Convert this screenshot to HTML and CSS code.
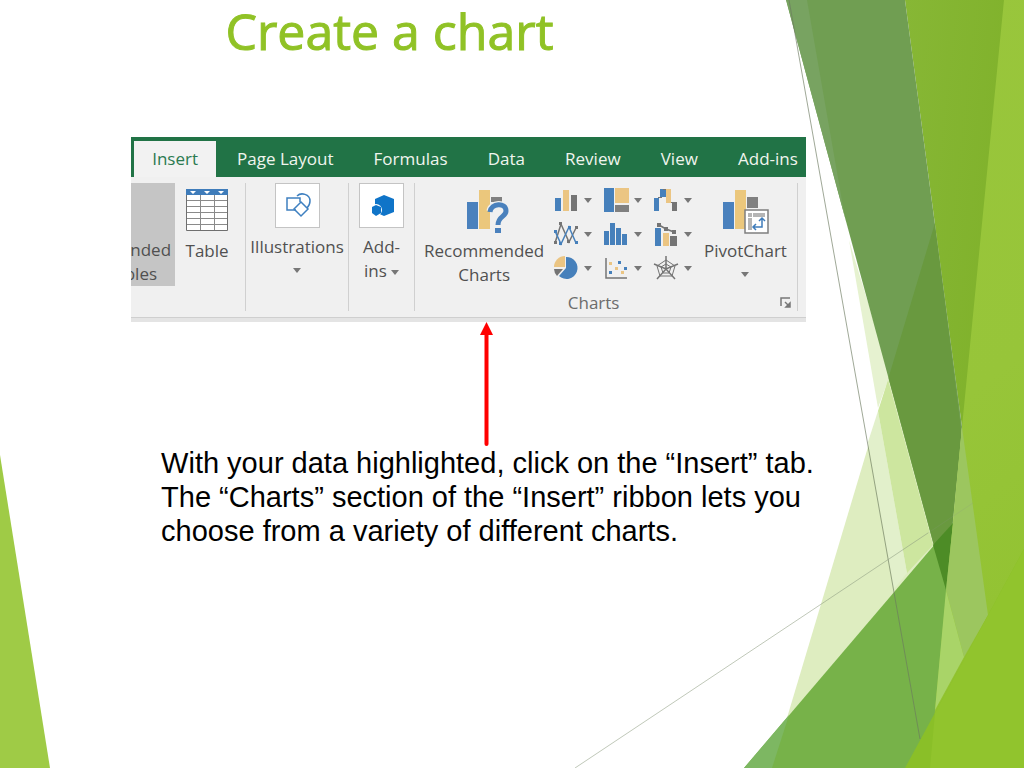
FILE: index.html
```html
<!DOCTYPE html>
<html lang="en">
<head>
<meta charset="utf-8">
<title>Create a chart</title>
<link rel="stylesheet" href="styles.css">
</head>
<body>
<svg class="facets" viewBox="0 0 1024 768" preserveAspectRatio="none" aria-hidden="true">
  <defs>
    <linearGradient id="mid" x1="0" y1="0" x2="1" y2="0.4"><stop offset="0" stop-color="#87b735"/><stop offset="1" stop-color="#7fb12a"/></linearGradient>
    <linearGradient id="right" x1="0" y1="0" x2="0.1" y2="1"><stop offset="0" stop-color="#99c63c"/><stop offset="0.55" stop-color="#97c539"/><stop offset="1" stop-color="#91c230"/></linearGradient>
    <clipPath id="bandClip"><path d="M786 0H905L962 427L946 590Z"/></clipPath>
  </defs>
  <path fill="#9fcb46" d="M0 455L50 768H0Z"/>
  <path fill="#deedc0" d="M935 223L772 768H960V223Z"/>
  <path fill="#e6f2d0" d="M849 240L878 408L890 375Z"/>
  <path fill="#cde69f" d="M888 380L878 411L907 573L933 545Z"/>
  <path fill="#e2f0cb" d="M878 411L868 442L894 589L907 573Z"/>
  <path fill="url(#mid)" d="M905 0H1024V427H962Z"/>
  <path fill="#709e52" d="M786 0H905L962 427L946 590Z"/>
  <g clip-path="url(#bandClip)">
    <path fill="#78a361" d="M786 0H807L860 304Z"/>
    <path fill="#69993f" d="M935 223L880 406L946 620L970 500Z"/>
  </g>
  <path fill="#77b249" d="M744 768L953 523L935 768Z"/>
  <path fill="#7db762" d="M744 768L789 715L772 768Z"/>
  <path fill="#4d8c26" d="M933 545L953 523L946 590Z"/>
  <path fill="url(#right)" d="M1004 0H1024V768H930L935 710L953 523L962 427Z"/>
  <path fill="#9cc65f" d="M962 427L988 615L964 657L946 590L953 523Z"/>
  <path fill="#a9d468" d="M946 590L964 657L935 710Z"/>
  <path fill="#8abf28" d="M1024 549L905 768H1024Z"/>
  <path fill="#91c42d" d="M935 713L1024 549V768H930Z"/>
  <path fill="none" stroke="#6b7a60" stroke-opacity="0.65" d="M789 0L920 739"/>
  <path fill="none" stroke="#8c9a80" stroke-opacity="0.55" d="M575 768L928 533"/>
  <path fill="none" stroke="#8c9a80" stroke-opacity="0.2" d="M928 533L973 503"/>
</svg>

<main class="slide">
  <h1 class="title">Create a chart</h1>

  <section class="ribbon" aria-label="Insert ribbon">
    <nav class="tabs">
      <button class="tab tab-active">Insert</button>
      <div class="tab-list">
        <button class="tab">Page Layout</button>
        <button class="tab">Formulas</button>
        <button class="tab">Data</button>
        <button class="tab">Review</button>
        <button class="tab">View</button>
        <button class="tab">Add-ins</button>
      </div>
    </nav>
    <div class="groups">
      <div class="group group-tables">
        <button class="clipped">
          <svg width="44" height="55" viewBox="0 0 44 55"><circle cx="-3" cy="29" r="6" fill="#3f80c0"/></svg>
          <span>nded</span>
          <span class="clipped-second">bles</span>
        </button>
        <button class="tool">
          <svg class="icon" width="44" height="44" viewBox="0 0 44 44">
            <path fill="#fff" d="M1 6H43V47H1Z"/>
            <path fill="none" stroke="#8a8a8a" d="M1 17.500H43M1 23.500H43M1 29.500H43M1 35.500H43M1 41.500H43M15.500 12V47M29.500 12V47"/>
            <path fill="none" stroke="#6f6f6f" d="M1.500 12V47.500H42.500V12"/>
            <path fill="#3f7cba" d="M1 6H43V12H1Z"/>
            <path fill="#fff" d="M5 8H11L8 11ZM19 8H25L22 11ZM33 8H39L36 11Z"/>
          </svg>
          <span>Table</span>
        </button>
      </div>
      <div class="group group-illustrations">
        <button class="tool tool-tile">
          <svg class="icon tile" width="45" height="45" viewBox="0 0 45 45" fill="none" stroke="#3f80c0" stroke-width="1.500">
            <path d="M21 27H12V15H25V19"/><path d="M22 13C26 9 35 11 35 18C35 21 34 23 32 25"/><path d="M26 19L33 26L26 33L19 26Z"/>
          </svg>
          <span>Illustrations</span>
          <i class="caret"></i>
        </button>
      </div>
      <div class="group group-addins">
        <button class="tool tool-tile">
          <svg class="icon tile" width="45" height="45" viewBox="0 0 45 45">
            <path fill="#0f74c8" d="M25 12L35 16V29L25 33L16 29V16Z"/><circle cx="17" cy="27" r="6" fill="#fff"/><path fill="#0f74c8" d="M17 22L22 24V30L17 33L13 30V24Z"/>
          </svg>
          <span>Add-<br>ins <i class="caret caret-inline"></i></span>
        </button>
      </div>
      <div class="group group-charts">
        <div class="chart-tools">
          <button class="tool">
            <svg class="icon" width="44" height="44" viewBox="0 0 44 44">
              <path fill="#4a81bd" d="M5 19H16V46H5Z"/><path fill="#ebc77c" d="M17 7H28V46H17Z"/><path fill="#808080" d="M29 14H40V19H29Z"/>
              <path fill="none" stroke="#f0f0f0" stroke-width="7" d="M28 28C29 20 44 19 44 27C44 33 36 32 36 40"/>
              <path fill="none" stroke="#4a81bd" stroke-width="5" d="M28 29C29 20 44 19 44 28C44 34 36 33 36 42"/>
              <path fill="#4a81bd" d="M33 45H39V50H33Z"/>
            </svg>
            <span>Recommended<br>Charts</span>
          </button>
          <div class="gallery">
            <button aria-label="Column chart"><svg width="24" height="24" viewBox="0 0 24 24"><path fill="#4680bb" d="M0 10H6V23H0Z"/><path fill="#ebc583" d="M8 2H14V23H8Z"/><path fill="#747474" d="M16 7H22V23H16Z"/></svg><i class="caret"></i></button>
            <button aria-label="Hierarchy chart"><svg width="24" height="24" viewBox="0 0 24 24"><path fill="#4680bb" d="M-1 0H9V24H-1Z"/><path fill="#ebc583" d="M10 0H24V15H10Z"/><path fill="#808080" d="M10 17H24V24H10Z"/></svg><i class="caret"></i></button>
            <button aria-label="Waterfall chart"><svg width="24" height="24" viewBox="0 0 24 24"><path fill="#4680bb" d="M-1 10H4V23H-1ZM5 1H11V9H5Z"/><path fill="none" stroke="#747474" d="M3 9.500H7M8 1.500H13M15 14.500H20"/><path fill="#ebc583" d="M11 1H16V15H11Z"/><path fill="#747474" d="M17 14H22V23H17Z"/></svg><i class="caret"></i></button>
            <button aria-label="Line chart"><svg width="24" height="24" viewBox="0 0 24 24"><path fill="none" stroke="#747474" stroke-width="1.500" d="M0 21L6 2L14 20L21 6"/><path fill="none" stroke="#4680bb" stroke-width="1.500" d="M0 9L6 22L14 5L21 21"/><path fill="#747474" d="M-1 19H2V22H-1ZM4 0H7V3H4ZM12 18H15V21H12ZM20 4H23V7H20Z"/><path fill="#4680bb" d="M-1 8H2V11H-1ZM4 20H7V23H4ZM13 4H16V7H13ZM20 19H23V22H20Z"/></svg><i class="caret"></i></button>
            <button aria-label="Statistic chart"><svg width="24" height="24" viewBox="0 0 24 24"><path fill="#4680bb" d="M-1 9H4V23H-1ZM5 1H10V23H5ZM11 6H16V23H11ZM17 12H22V23H17Z"/></svg><i class="caret"></i></button>
            <button aria-label="Combo chart"><svg width="24" height="24" viewBox="0 0 24 24"><path fill="#4680bb" d="M0 6H6V24H0Z"/><path fill="#ebc583" d="M8 11H14V24H8Z"/><path fill="#747474" d="M15 14H22V24H15Z"/><path fill="none" stroke="#f0f0f0" stroke-width="4" d="M4 3L11 7L19 10"/><path fill="none" stroke="#747474" stroke-width="1.500" d="M4 3L11 7L19 10"/><path fill="#747474" d="M2 1H6V5H2ZM9 5H13V9H9ZM17 8H21V12H17Z"/></svg><i class="caret"></i></button>
            <button aria-label="Pie chart"><svg width="24" height="24" viewBox="0 0 24 24"><path fill="#ebc583" d="M10 11H-1A11 11 0 0 1 10 0Z"/><path fill="#4680bb" d="M11 1A11 11 0 1 1 4 20L11 12Z"/><path fill="#747474" d="M-1 13H8L2 20A11 11 0 0 1 -1 13Z"/></svg><i class="caret"></i></button>
            <button aria-label="Scatter chart"><svg width="24" height="24" viewBox="0 0 24 24"><path fill="none" stroke="#747474" stroke-width="1.500" d="M1 2V22H22"/><path fill="#ebc583" d="M4 6H7V9H4ZM10 11H13V14H10ZM16 15H19V18H16Z"/><path fill="#4680bb" d="M13 5H16V8H13ZM19 11H22V14H19ZM4 15H7V18H4Z"/></svg><i class="caret"></i></button>
            <button aria-label="Radar chart"><svg width="24" height="24" viewBox="0 0 24 24" fill="none" stroke="#747474"><path stroke-width="1.500" d="M11 0V13M-1 8L11 13L23 8M2 23L11 13L20 23"/><path d="M11 4L20 10L17 20H5L2 10ZM11 8L16 11L14 17H8L6 11Z"/></svg><i class="caret"></i></button>
          </div>
          <button class="tool">
            <svg class="icon" width="44" height="44" viewBox="0 0 44 44">
              <path fill="#4a81bd" d="M0 19H11V46H0Z"/><path fill="#ebc77c" d="M12 7H23V46H12Z"/><path fill="#808080" d="M24 14H35V25H24Z"/>
              <path fill="#fff" stroke="#7f7f7f" stroke-width="1.500" d="M22 27H45V50H22Z"/>
              <path fill="#b5b5b5" d="M25 30H29V34H25ZM30 30H42V34H30ZM25 35H29V47H25Z"/>
              <path fill="none" stroke="#3f7cba" stroke-width="1.500" d="M39 36V44H30M36 38L39 35L42 38M33 41L30 44L33 47"/>
            </svg>
            <span>PivotChart</span>
            <i class="caret"></i>
          </button>
        </div>
        <div class="group-footer">
          <span class="group-name">Charts</span>
          <button class="launcher" aria-label="Chart options"><svg width="12" height="12" viewBox="0 0 12 12" fill="none" stroke="#777" stroke-width="1.500"><path d="M1 9V1H10"/><path d="M5 5L9 9"/><path fill="#777" d="M10 6V10H6Z"/></svg></button>
        </div>
      </div>
    </div>
  </section>

  <svg class="arrow" width="13" height="124" viewBox="0 0 13 124" aria-hidden="true"><path stroke="#f00" stroke-width="4" stroke-linecap="round" d="M6.500 10V122"/><path fill="#f00" d="M6.500 0L13 13H0Z"/></svg>

  <p class="caption">With your data highlighted, click on the “Insert” tab.<br>The “Charts” section of the “Insert” ribbon lets you<br>choose from a variety of different charts.</p>
</main>
</body>
</html>
```

FILE: styles.css
```css
* { box-sizing: border-box; }

body {
  margin: 0;
  min-height: 100vh;
  position: relative;
  overflow-x: hidden;
  background: #fff;
  font-family: "Open Sans", "Noto Sans", sans-serif;
}

button {
  margin: 0;
  padding: 0;
  border: 0;
  background: none;
  color: inherit;
  font: inherit;
}

svg { display: block; overflow: visible; flex: none; }

.facets {
  position: absolute;
  inset: 0;
  width: 100%;
  height: 100%;
}

.slide {
  position: relative;
  padding: 0 21.3% 0 12.8%;
}

.title {
  margin: 0 0 75px;
  padding-right: 158px;
  text-align: center;
  white-space: nowrap;
  font-size: 50px;
  font-weight: 400;
  line-height: 62px;
  color: #90c226;
  -webkit-text-stroke: 1px #90c226;
}

.ribbon {
  background: #f0f0f0;
  border-bottom: 4px solid #e4e4e4;
  color: #505050;
  font-size: 17px;
  line-height: 24px;
}

.tabs {
  display: flex;
  height: 40px;
  padding: 4px 8px 0 3px;
  background: #217346;
  color: #f0f5ee;
}

.tab { white-space: nowrap; }

.tab-active {
  width: 82px;
  background: #f2f2f2;
  color: #2b7a50;
}

.tab-list {
  flex: 1;
  display: flex;
  justify-content: space-between;
  padding-left: 21px;
}

.groups {
  display: flex;
  padding: 6px 8px 6px 0;
  border-bottom: 1px solid #cfcfcf;
}

.group {
  display: flex;
  justify-content: center;
  height: 128px;
  border-right: 1px solid #d0d0d0;
}

.group-tables {
  width: 115px;
  justify-content: flex-start;
  gap: 10px;
}

.group-illustrations { width: 103px; }
.group-addins { width: 66px; }

.group-charts {
  flex: 1;
  flex-direction: column;
  justify-content: space-between;
  padding: 0 5px 0 9px;
}

.clipped {
  display: flex;
  flex-direction: column;
  align-items: flex-end;
  justify-content: flex-start;
  width: 44px;
  height: 103px;
  padding-right: 4px;
  overflow: hidden;
  background: #c5c5c5;
}

.clipped-second { padding-right: 14px; }

.tool {
  display: flex;
  flex-direction: column;
  align-items: center;
  justify-content: flex-start;
  white-space: nowrap;
}

.icon { margin-bottom: 12px; }
.tool-tile .icon { margin-bottom: 7px; }

.tile {
  background: #fff;
  outline: 1px solid #c4c4c4;
  outline-offset: -1px;
}

.caret {
  display: block;
  border: 4px solid transparent;
  border-top: 5px solid #777;
  border-bottom: 0;
}

.tool > .caret { margin-top: 9px; }
.caret-inline { display: inline-block; vertical-align: middle; }

.chart-tools {
  display: flex;
  justify-content: space-between;
  padding-right: 5px;
}

.gallery {
  display: grid;
  grid-template-columns: 50px 50px 38px;
  grid-auto-rows: 34px;
}

.gallery button {
  display: flex;
  align-items: center;
  justify-content: flex-start;
  gap: 5px;
}

.group-footer {
  display: grid;
  grid-template-columns: 5fr auto 6fr;
  align-items: center;
  line-height: 16px;
  color: #6c6c6c;
}

.group-name { grid-column: 2; }
.launcher { justify-self: end; }

.arrow { margin-left: 51.7%; }

.caption {
  margin: 0;
  padding-left: 30px;
  white-space: nowrap;
  font-family: "Liberation Sans", Arial, sans-serif;
  font-size: 29px;
  line-height: 34px;
  color: #000;
}
```
